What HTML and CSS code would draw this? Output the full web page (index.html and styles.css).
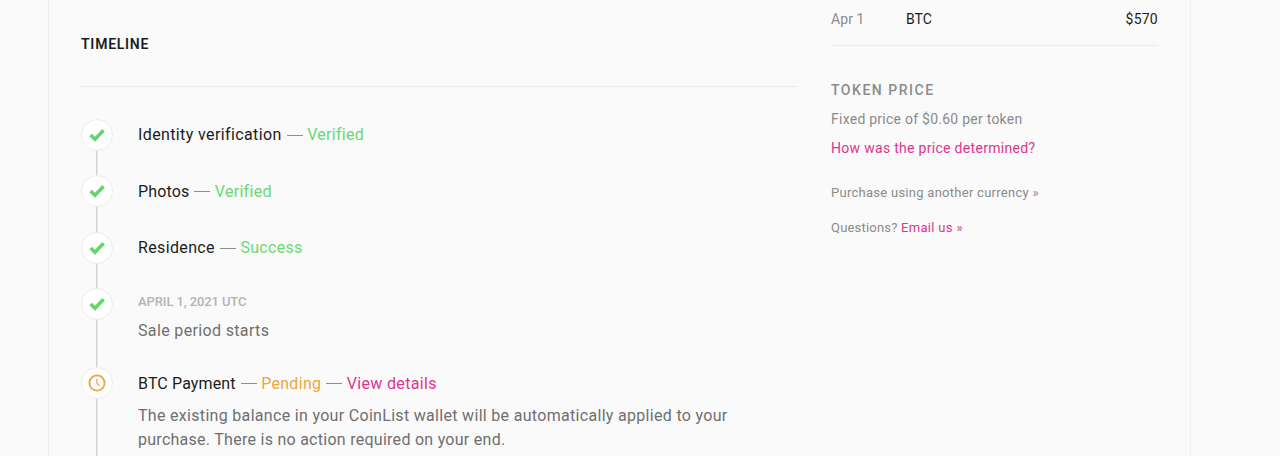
FILE: index.html
```html
<!DOCTYPE html>
<html lang="en">
<head>
<meta charset="utf-8">
<title>Timeline</title>
<link rel="stylesheet" href="styles.css">
</head>
<body>
<div class="panel">
  <main class="main">
    <h2 class="heading">TIMELINE</h2>
    <ol class="timeline">
      <li class="step first">
        <div class="rail"><span class="badge"><svg class="check" viewBox="0 0 16 14"><path d="M1.6 7 6 11.2 14.6 2.3"/></svg></span></div>
        <p class="title"><span class="name identity">Identity verification</span><span class="dash"></span><span class="ok">Verified</span></p>
      </li>
      <li class="step">
        <div class="rail"><span class="badge"><svg class="check" viewBox="0 0 16 14"><path d="M1.6 7 6 11.2 14.6 2.3"/></svg></span></div>
        <p class="title"><span class="name">Photos</span><span class="dash"></span><span class="ok">Verified</span></p>
      </li>
      <li class="step">
        <div class="rail"><span class="badge"><svg class="check" viewBox="0 0 16 14"><path d="M1.6 7 6 11.2 14.6 2.3"/></svg></span></div>
        <p class="title"><span class="name residence">Residence</span><span class="dash"></span><span class="ok">Success</span></p>
      </li>
      <li class="step dated">
        <div class="rail"><span class="badge"><svg class="check" viewBox="0 0 16 14"><path d="M1.6 7 6 11.2 14.6 2.3"/></svg></span></div>
        <div>
          <p class="date">APRIL 1, 2021 UTC</p>
          <p class="event">Sale period starts</p>
        </div>
      </li>
      <li class="step payment">
        <div class="rail"><span class="badge"><svg class="clock" viewBox="0 0 18 18"><circle cx="9" cy="9" r="7.6"/><path d="M8.9 4.8V9.2L11.3 11.8"/></svg></span></div>
        <div>
          <p class="title"><span class="name">BTC Payment</span><span class="dash"></span><span class="pending">Pending</span><span class="dash"></span><a class="link details">View details</a></p>
          <p class="note">The existing balance in your CoinList wallet will be automatically applied to your<br><span class="last">purchase. There is no action required on your end.</span></p>
        </div>
      </li>
    </ol>
  </main>
  <aside class="side">
    <div class="order"><span class="day">Apr 1</span><span class="coin">BTC</span><span class="amount">$570</span></div>
    <h3 class="subheading">TOKEN PRICE</h3>
    <p class="fixed">Fixed price of $0.60 per token</p>
    <a class="link how">How was the price determined?</a>
    <p class="small currency">Purchase using another currency »</p>
    <p class="small questions">Questions? <a class="link email">Email us »</a></p>
  </aside>
</div>
</body>
</html>
```
FILE: styles.css
```css
* { box-sizing: border-box; }
body { margin: 0; background: #fafafa; font-family: Roboto, sans-serif; font-size: 16px; color: #1c1c1c; }
h2, h3, p, ol { margin: 0; padding: 0; }
.panel { display: flex; justify-content: space-between; width: 1143px; height: 456px; margin-left: 48px; padding: 0 32px; border: solid #efefef; border-width: 0 1px; }
.main { width: 717px; }
.heading { height: 87px; padding-top: 34px; border-bottom: 1px solid #ebebeb; font-size: 14px; line-height: 20px; font-weight: 600; letter-spacing: .75px; }
.timeline { list-style: none; padding-top: 32px; }
.step { display: flex; gap: 25px; height: 56.3px; }
.dated { height: 79px; }
.payment { height: 89px; }
.rail { display: flex; flex-direction: column; width: 32px; flex: none; }
.rail::after { content: ""; flex: 1; width: 2px; margin-left: 15px; background: linear-gradient(to right, #d2d2d2 50%, #ebebeb 50%); }
.badge { display: flex; align-items: center; justify-content: center; width: 32px; height: 32px; border: 1px solid #ececec; border-radius: 50%; background: #fff; }
.check { width: 16px; height: 14px; fill: none; stroke: #62d56b; stroke-width: 3.5; }
.clock { width: 18px; height: 18px; fill: none; stroke: #eda53c; stroke-width: 1.8; }
.clock path { stroke-width: 1.2; }
.title { display: flex; align-items: center; height: 32px; white-space: nowrap; }
.first .title { height: 31px; }
.payment .title { height: 33px; }
.dash { width: 16px; height: 1px; margin: 1px 4.5px 0 5px; background: #8d8d8d; }
.name { letter-spacing: .13px; }
.identity { letter-spacing: .38px; }
.residence { letter-spacing: .36px; }
.ok { color: #6bd873; letter-spacing: .3px; }
.pending { color: #eda53c; letter-spacing: .3px; }
.link { color: #dc3592; }
.details { letter-spacing: .33px; }
.date { padding-top: 4px; font-size: 13px; line-height: 20px; font-weight: 500; color: #b3b3b3; letter-spacing: -.1px; }
.event { margin-top: 6px; line-height: 26px; color: #6f6f6f; letter-spacing: .35px; }
.note { margin-top: 4px; line-height: 24px; color: #6f6f6f; letter-spacing: .31px; white-space: nowrap; }
.last { letter-spacing: .27px; }
.side { width: 327px; display: flex; flex-direction: column; font-size: 14px; color: #8b8b8b; }
.order { display: flex; height: 46px; padding-top: 9px; line-height: 20px; border-bottom: 1px solid #ebebeb; }
.day { width: 75px; letter-spacing: .1px; }
.coin, .amount { color: #1c1c1c; }
.amount { margin-left: auto; letter-spacing: .25px; }
.subheading { margin-top: 34px; line-height: 20px; font-size: 14px; font-weight: 500; letter-spacing: 1.52px; }
.fixed, .how { margin-top: 9px; line-height: 20px; letter-spacing: .25px; }
.how { letter-spacing: .3px; }
.small { font-size: 13px; line-height: 20px; letter-spacing: .2px; }
.currency { margin-top: 25px; letter-spacing: .27px; }
.questions { margin-top: 15px; }
.email { letter-spacing: .32px; }
```
